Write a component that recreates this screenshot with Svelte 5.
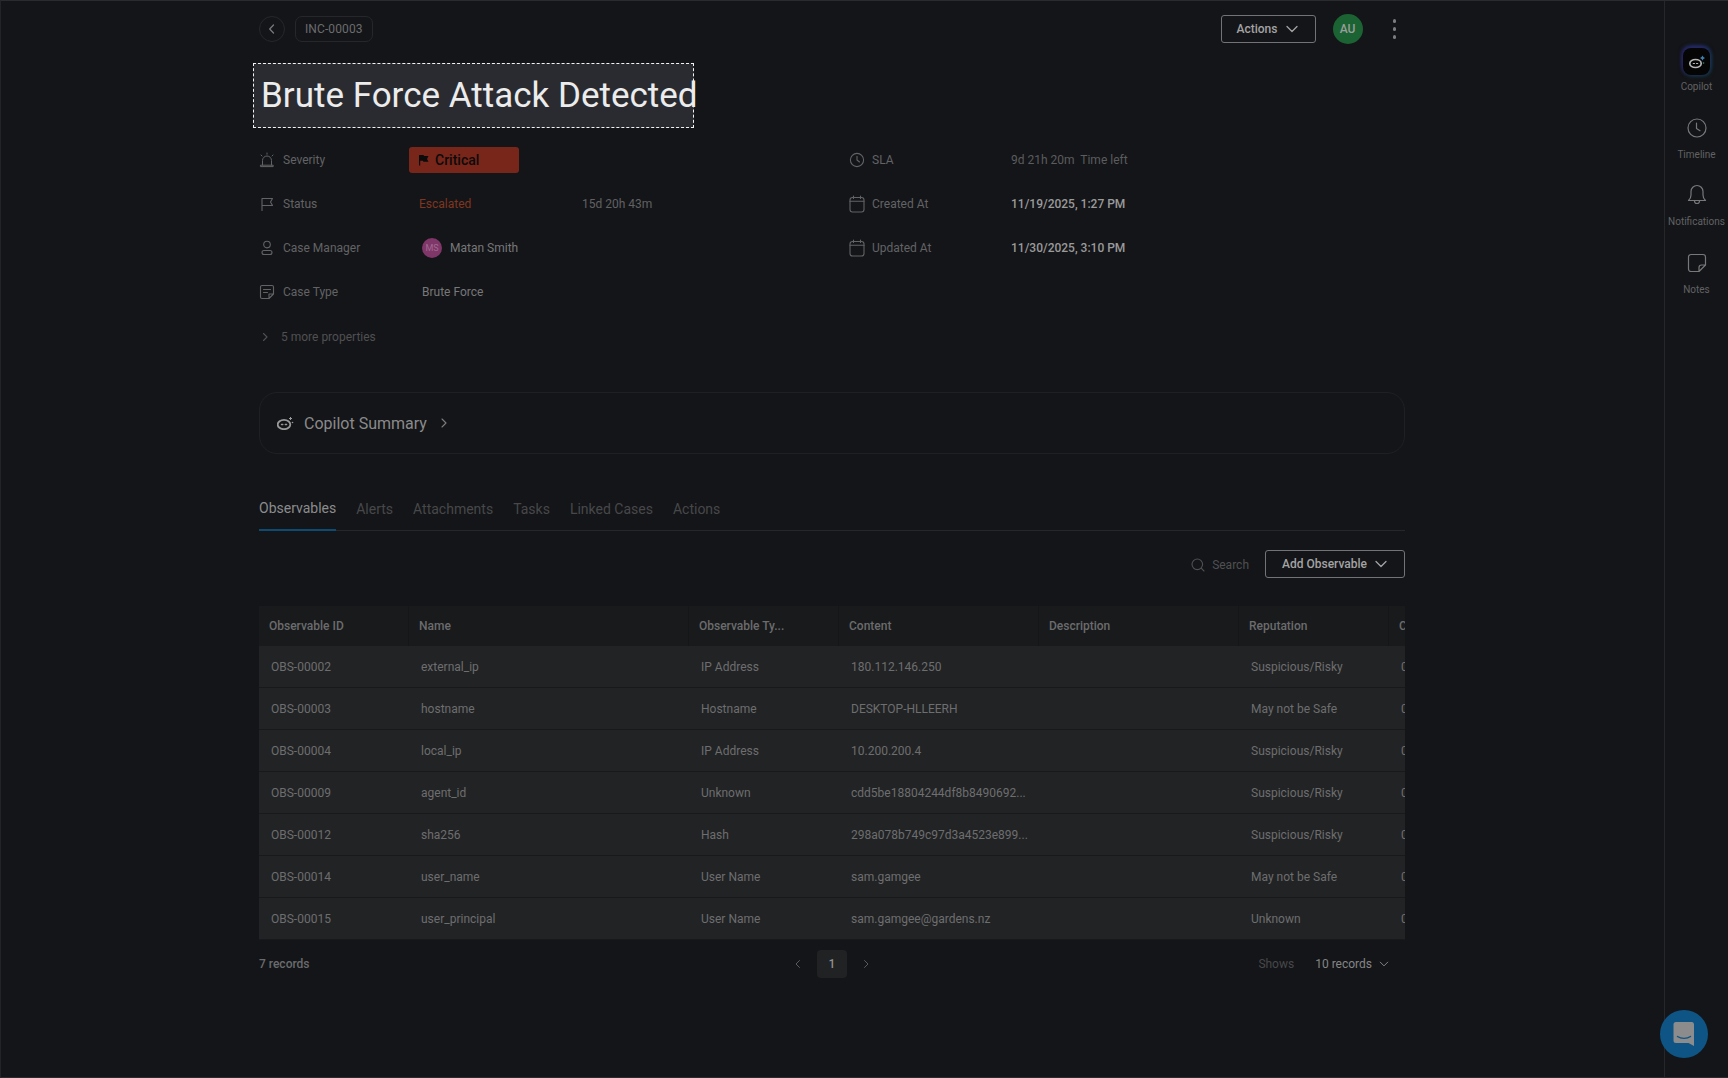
<script lang="ts">
  // Case detail page, dimmed behind the inline title edit
  const columns = ['Observable ID', 'Name', 'Observable Ty...', 'Content', 'Description', 'Reputation', 'Created'];

  const rows = [
    ['OBS-00002', 'external_ip', 'IP Address', '180.112.146.250', '', 'Suspicious/Risky', '0'],
    ['OBS-00003', 'hostname', 'Hostname', 'DESKTOP-HLLEERH', '', 'May not be Safe', '0'],
    ['OBS-00004', 'local_ip', 'IP Address', '10.200.200.4', '', 'Suspicious/Risky', '0'],
    ['OBS-00009', 'agent_id', 'Unknown', 'cdd5be18804244df8b8490692...', '', 'Suspicious/Risky', '0'],
    ['OBS-00012', 'sha256', 'Hash', '298a078b749c97d3a4523e899...', '', 'Suspicious/Risky', '0'],
    ['OBS-00014', 'user_name', 'User Name', 'sam.gamgee', '', 'May not be Safe', '0'],
    ['OBS-00015', 'user_principal', 'User Name', 'sam.gamgee@gardens.nz', '', 'Unknown', '0']
  ];

  const tabs = ['Observables', 'Alerts', 'Attachments', 'Tasks', 'Linked Cases', 'Actions'];
</script>

{#snippet chevronDown(size)}
  <svg width={size} height={size} viewBox="0 0 16 16" fill="none" stroke="currentColor" stroke-width="1.3" stroke-linecap="round" stroke-linejoin="round"><path d="M3 5.5l5 5 5-5" /></svg>
{/snippet}

{#snippet calendar()}
  <svg width="16" height="18" viewBox="0 0 16 18" fill="none" stroke="currentColor" stroke-width="1.1" stroke-linecap="round"><rect x="1" y="2.5" width="14" height="14.5" rx="2.5" /><path d="M1 6.2h14M4.5 1v2.4M11.5 1v2.4" /></svg>
{/snippet}

<div class="app">
  <main class="page">
    <header class="topbar">
      <button type="button" class="back" aria-label="Back">
        <svg width="12" height="12" viewBox="0 0 12 12" fill="none" stroke="currentColor" stroke-width="1.3" stroke-linecap="round" stroke-linejoin="round"><path d="M7.5 2L3.7 6l3.8 4" /></svg>
      </button>
      <span class="case-id">INC-00003</span>
      <div class="topbar-right">
        <button type="button" class="outline-btn actions-btn">Actions {@render chevronDown(16)}</button>
        <span class="me">AU</span>
        <span class="kebab"><i></i><i></i><i></i></span>
      </div>
    </header>

    <div class="title-box"><span class="title-text">Brute Force Attack Detected</span><span class="caret"></span></div>

    <section class="props">
      <div class="prop-col left">
        <div class="prop">
          <span class="prop-label">
            <svg class="prop-icon" width="16" height="16" viewBox="0 0 16 16" fill="none" stroke="currentColor" stroke-width="1" stroke-linecap="round"><path d="M3.5 13V8.5a4.5 4.5 0 0 1 9 0V13M1.8 13.2h12.4v1.4H1.8zM8 1v1.2M2 3l1 1M14 3l-1 1" /></svg>
            Severity
          </span>
          <span class="severity">
            <svg width="11" height="12" viewBox="0 0 11 12" fill="#0b0b0b"><path d="M1 1h4.5l.7 1H10.5L9 5l1.500 2.800H5.500l-.7-1H2.200V11.500H1z" /></svg>
            Critical
          </span>
        </div>
        <div class="prop">
          <span class="prop-label">
            <svg class="prop-icon" width="16" height="16" viewBox="0 0 16 16" fill="none" stroke="currentColor" stroke-width="1.1" stroke-linejoin="round" stroke-linecap="round"><path d="M3 14.500V2.500h10.500L11.500 6l2 3.500H3" /></svg>
            Status
          </span>
          <span class="escalated">Escalated</span>
          <span class="duration">15d 20h 43m</span>
        </div>
        <div class="prop">
          <span class="prop-label">
            <svg class="prop-icon" width="16" height="16" viewBox="0 0 16 16" fill="none" stroke="currentColor" stroke-width="1.1"><circle cx="8" cy="4.600" r="3.300" /><rect x="3" y="10.500" width="10" height="4" rx="2" /></svg>
            Case Manager
          </span>
          <span class="manager"><span class="initials">MS</span>Matan Smith</span>
        </div>
        <div class="prop">
          <span class="prop-label">
            <svg class="prop-icon" width="16" height="16" viewBox="0 0 16 16" fill="none" stroke="currentColor" stroke-width="1.1" stroke-linejoin="round" stroke-linecap="round"><path d="M10 14.500H3a1.500 1.500 0 0 1-1.500-1.500V3A1.500 1.500 0 0 1 3 1.500h10A1.500 1.500 0 0 1 14.500 3v7zM10 14.500V10h4.500M4.500 5.500h7M4.500 8.500h4" /></svg>
            Case Type
          </span>
          <span class="case-type">Brute Force</span>
        </div>
      </div>
      <div class="prop-col right">
        <div class="prop">
          <span class="prop-label">
            <svg class="prop-icon" width="16" height="16" viewBox="0 0 16 16" fill="none" stroke="currentColor" stroke-width="1.1" stroke-linecap="round" stroke-linejoin="round"><circle cx="8" cy="8" r="6.600" /><path d="M8 4.200V8l2.500 2" /></svg>
            SLA
          </span>
          <span class="sla">9d 21h 20m&nbsp; Time left</span>
        </div>
        <div class="prop">
          <span class="prop-label">{@render calendar()} Created At</span>
          <span class="date">11/19/2025, 1:27 PM</span>
        </div>
        <div class="prop">
          <span class="prop-label">{@render calendar()} Updated At</span>
          <span class="date">11/30/2025, 3:10 PM</span>
        </div>
      </div>
    </section>

    <div class="more">
      <svg width="12" height="12" viewBox="0 0 12 12" fill="none" stroke="currentColor" stroke-width="1.1" stroke-linecap="round" stroke-linejoin="round"><path d="M4.500 2.500L8 6l-3.500 3.500" /></svg>
      5 more properties
    </div>

    <section class="summary">
      <svg width="17" height="14" viewBox="0 0 17 14" fill="none"><ellipse cx="7" cy="8.500" rx="6.300" ry="4.700" stroke="#9a9a9a" stroke-width="1.800" /><path d="M4.500 8.500h1.300M8.300 8.500h1.300" stroke="#9a9a9a" stroke-width="1.400" stroke-linecap="round" /><path d="M13.500 1v3M12 2.500h3" stroke="#9a9a9a" stroke-width="1" /><circle cx="15.500" cy="6.500" r=".8" fill="#9a9a9a" /></svg>
      <span class="summary-title">Copilot Summary</span>
      <svg width="12" height="12" viewBox="0 0 12 12" fill="none" stroke="#7c7c7c" stroke-width="1.100" stroke-linecap="round" stroke-linejoin="round"><path d="M4 2l4 4-4 4" /></svg>
    </section>

    <nav class="tabs">
      {#each tabs as tab, i}
        <span class="tab" class:active={i === 0}>{tab}</span>
      {/each}
    </nav>

    <div class="toolbar">
      <span class="search">
        <svg width="14" height="14" viewBox="0 0 14 14" fill="none" stroke="currentColor" stroke-width="1.100" stroke-linecap="round"><circle cx="6.300" cy="6.300" r="5.300" /><path d="M10.200 10.200L13 13" /></svg>
        Search
      </span>
      <button type="button" class="outline-btn add-btn">Add Observable {@render chevronDown(16)}</button>
    </div>

    <div class="table">
      <div class="thead">
        {#each columns as col}
          <div class="th">{col}</div>
        {/each}
      </div>
      {#each rows as row}
        <div class="tr">
          {#each row as cell}
            <div class="td">{cell}</div>
          {/each}
        </div>
      {/each}
    </div>

    <footer class="pager">
      <span class="count">7 records</span>
      <div class="pages">
        <svg width="12" height="12" viewBox="0 0 12 12" fill="none" stroke="currentColor" stroke-width="1" stroke-linecap="round" stroke-linejoin="round"><path d="M7.500 2.500L4 6l3.500 3.500" /></svg>
        <span class="page-num">1</span>
        <svg width="12" height="12" viewBox="0 0 12 12" fill="none" stroke="currentColor" stroke-width="1" stroke-linecap="round" stroke-linejoin="round"><path d="M4.500 2.500L8 6l-3.500 3.500" /></svg>
      </div>
      <div class="shows">
        <span class="shows-label">Shows</span>
        <span class="shows-value">10 records {@render chevronDown(12)}</span>
      </div>
    </footer>
  </main>

  <aside class="rail">
    <div class="rail-item first">
      <span class="copilot-tile">
        <svg width="18" height="16" viewBox="0 0 18 16" fill="none"><ellipse cx="7.500" cy="9.500" rx="5.700" ry="4" stroke="#b5b5b5" stroke-width="1.700" /><path d="M5.300 9.500h1.200M8.500 9.500h1.200" stroke="#b5b5b5" stroke-width="1.200" stroke-linecap="round" /><path d="M14.500 1.500l.9 1.600 1.600.9-1.600.9-.9 1.600-.9-1.600-1.600-.9 1.600-.9z" fill="#3f7fae" /><circle cx="15.500" cy="9" r=".8" fill="#4c8a6a" /></svg>
      </span>
      <span class="rail-label">Copilot</span>
    </div>
    <div class="rail-item">
      <svg width="20" height="20" viewBox="0 0 20 20" fill="none" stroke="currentColor" stroke-width="1.200" stroke-linecap="round" stroke-linejoin="round"><circle cx="10" cy="10" r="9" /><path d="M9.500 5v5.500l3.500 2.200" /></svg>
      <span class="rail-label">Timeline</span>
    </div>
    <div class="rail-item">
      <svg width="20" height="21" viewBox="0 0 20 21" fill="none" stroke="currentColor" stroke-width="1.200" stroke-linecap="round" stroke-linejoin="round"><path d="M1.500 16.500c1.700-1.500 2.500-3 2.500-5.500V7.500a6 6 0 0 1 12 0V11c0 2.500.8 4 2.500 5.500zM7.500 17a2.500 2.500 0 0 0 5 0" /></svg>
      <span class="rail-label">Notifications</span>
    </div>
    <div class="rail-item">
      <svg width="20" height="20" viewBox="0 0 20 20" fill="none" stroke="currentColor" stroke-width="1.200" stroke-linejoin="round"><path d="M12 18.500H4a2.500 2.500 0 0 1-2.500-2.500V4A2.500 2.500 0 0 1 4 1.500h12A2.500 2.500 0 0 1 18.500 4v8zM12 18.500V14.500a2.500 2.500 0 0 1 2.500-2.500h4" /></svg>
      <span class="rail-label">Notes</span>
    </div>
  </aside>

  <button type="button" class="chat" aria-label="Chat">
    <svg width="22" height="26" viewBox="0 0 22 26" fill="none"><path d="M3 1h16a2.500 2.500 0 0 1 2 2.500V25l-5.500-3H3a2.500 2.500 0 0 1-2.500-2.500v-16A2.500 2.500 0 0 1 3 1z" fill="#8c8c8c" /><path d="M4.500 15.500c3.500 2.500 9.500 2.500 13 0" stroke="#0e5585" stroke-width="1.400" stroke-linecap="round" /></svg>
  </button>
</div>

<style>
  :global(body) {
    background: #141518;
    overflow: hidden;
  }

  .app {
    position: relative;
    display: flex;
    box-sizing: border-box;
    width: 1728px;
    height: 1078px;
    border-top: 1px solid #2a2b2e;
    border-bottom: 1px solid #2a2b2e;
    border-left: 1px solid #232427;
    background: #141518;
    color: #6f7072;
    font-family: Roboto, "Liberation Sans", sans-serif;
    font-size: 12px;
    overflow: hidden;
  }

  .page {
    box-sizing: border-box;
    width: 1663px;
    padding: 15px 259px 0 258px;
    flex-shrink: 0;
  }

  button {
    font-family: inherit;
    background: none;
    padding: 0;
    margin: 0;
    cursor: pointer;
  }

  .topbar {
    display: flex;
    align-items: center;
    height: 26px;
  }

  .back {
    display: flex;
    align-items: center;
    justify-content: center;
    box-sizing: border-box;
    width: 26px;
    height: 26px;
    border: 1px solid #26272a;
    border-radius: 50%;
    color: #77787a;
  }

  .case-id {
    display: flex;
    align-items: center;
    box-sizing: border-box;
    height: 26px;
    margin-left: 10px;
    padding: 0 9px;
    border: 1px solid #26272a;
    border-radius: 7px;
    color: #6b6c6e;
    letter-spacing: 0.1px;
  }

  .topbar-right {
    display: flex;
    align-items: center;
    margin-left: auto;
    margin-right: 6px;
  }

  .outline-btn {
    display: flex;
    align-items: center;
    box-sizing: border-box;
    height: 28px;
    border: 1px solid #727376;
    border-radius: 3px;
    color: #a3a3a4;
    font-size: 12px;
    font-weight: 500;
  }

  .actions-btn {
    width: 95px;
    padding-left: 15px;
    gap: 7px;
  }

  .me {
    display: flex;
    align-items: center;
    justify-content: center;
    width: 30px;
    height: 30px;
    margin-left: 17px;
    border-radius: 50%;
    background: #1c6333;
    color: #9a9d9b;
    font-size: 12px;
    font-weight: 500;
  }

  .kebab {
    display: flex;
    flex-direction: column;
    gap: 4.500px;
    margin-left: 30px;
    margin-right: 3px;
  }

  .kebab i {
    display: block;
    width: 3.500px;
    height: 3.500px;
    border-radius: 50%;
    background: #7d7d7f;
  }

  .title-box {
    display: inline-flex;
    align-items: center;
    box-sizing: border-box;
    width: 441px;
    height: 65px;
    margin: 21px 0 0 -6px;
    padding-left: 7px;
    border: 1.500px dashed #f2f2f2;
    background: #2a2b31;
  }

  .title-text {
    color: #ececec;
    font-size: 35px;
    white-space: nowrap;
  }

  .caret {
    display: block;
    width: 1.500px;
    height: 38px;
    margin-left: 1px;
    background: #d0d0d0;
  }

  .props {
    display: flex;
    margin-top: 10px;
  }

  .prop-col.left {
    width: 590px;
  }

  .prop {
    display: flex;
    align-items: center;
    height: 44px;
  }

  .prop-label {
    display: flex;
    align-items: center;
    gap: 8px;
    color: #626365;
  }

  .left .prop-label {
    width: 150px;
  }

  .right .prop-label {
    width: 162px;
    gap: 7px;
  }

  .prop-icon {
    flex-shrink: 0;
  }

  .severity {
    display: flex;
    align-items: center;
    gap: 6px;
    box-sizing: border-box;
    width: 110px;
    height: 26px;
    padding-left: 9px;
    border-radius: 3px;
    background: #78251a;
    color: #0b0b0b;
    font-size: 14px;
    font-weight: 500;
  }

  .escalated {
    width: 163px;
    margin-left: 10px;
    color: #80351f;
  }

  .duration {
    color: #606163;
  }

  .manager {
    display: flex;
    align-items: center;
    gap: 8px;
    margin-left: 13px;
    color: #77787a;
  }

  .initials {
    display: flex;
    align-items: center;
    justify-content: center;
    width: 20px;
    height: 20px;
    border-radius: 50%;
    background: #7f3668;
    color: #a06a91;
    font-size: 9px;
  }

  .case-type {
    margin-left: 13px;
    color: #77787a;
  }

  .sla {
    color: #5b5c5e;
  }

  .date {
    color: #9a9a9b;
    font-weight: 500;
  }

  .more {
    display: flex;
    align-items: center;
    gap: 10px;
    height: 16px;
    margin-top: 15px;
    padding-left: 0;
    color: #4f5052;
  }

  .summary {
    display: flex;
    align-items: center;
    box-sizing: border-box;
    height: 62px;
    margin-top: 47px;
    padding-left: 17px;
    border: 1px solid #1f2023;
    border-radius: 18px;
  }

  .summary-title {
    margin: 0 11px 0 10px;
    color: #8a8a8b;
    font-size: 16px;
  }

  .tabs {
    display: flex;
    gap: 20px;
    height: 77px;
    box-sizing: border-box;
    border-bottom: 1px solid #25272a;
  }

  .tab {
    display: flex;
    align-items: flex-end;
    height: 77px;
    box-sizing: border-box;
    padding-bottom: 14px;
    color: #47484a;
    font-size: 14px;
  }

  .tab.active {
    color: #8b8c8d;
    border-bottom: 2px solid #0f4a73;
    padding-bottom: 13px;
  }

  .toolbar {
    display: flex;
    align-items: center;
    justify-content: flex-end;
    height: 28px;
    margin-top: 19px;
  }

  .search {
    display: flex;
    align-items: center;
    gap: 7px;
    margin: 2px 16px 0 0;
    color: #4f5052;
  }

  .add-btn {
    width: 140px;
    padding-left: 16px;
    gap: 6px;
  }

  .table {
    width: 100%;
    margin-top: 28px;
    overflow: hidden;
  }

  .thead,
  .tr {
    display: grid;
    grid-template-columns: 150px 280px 150px 200px 200px 150px 150px;
  }

  .thead {
    height: 40px;
    background: #191a1c;
  }

  .th {
    display: flex;
    align-items: center;
    padding-left: 10px;
    border-right: 1px solid #151618;
    color: #6b6c6d;
    font-weight: 500;
    white-space: nowrap;
  }

  .tr {
    height: 42px;
    box-sizing: border-box;
    background: #222325;
    border-bottom: 1px solid #18191b;
  }

  .td {
    display: flex;
    align-items: center;
    padding-left: 12px;
    color: #6d6e6f;
    white-space: nowrap;
  }

  .pager {
    display: grid;
    grid-template-columns: 1fr auto 1fr;
    align-items: center;
    height: 28px;
    margin-top: 10px;
  }

  .count {
    color: #6a6b6c;
    font-weight: 500;
  }

  .pages {
    display: flex;
    align-items: center;
    gap: 13px;
    color: #5a5b5d;
  }

  .page-num {
    display: flex;
    align-items: center;
    justify-content: center;
    width: 30px;
    height: 28px;
    border-radius: 4px;
    background: #212224;
    color: #8f8f90;
    font-weight: 500;
  }

  .shows {
    display: flex;
    align-items: center;
    justify-content: flex-end;
    gap: 21px;
    padding-right: 15px;
  }

  .shows-label {
    color: #47484a;
  }

  .shows-value {
    display: flex;
    align-items: center;
    gap: 6px;
    color: #858586;
  }

  .rail {
    display: flex;
    flex-direction: column;
    box-sizing: border-box;
    width: 64px;
    border-left: 1px solid #26272a;
    padding-top: 45px;
  }

  .rail-item {
    display: flex;
    flex-direction: column;
    align-items: center;
    justify-content: flex-end;
    height: 67.500px;
    color: #77787a;
  }

  .rail-item.first {
    height: 47px;
  }

  .rail-label {
    margin-top: 11px;
    color: #616264;
    font-size: 10px;
    line-height: 12px;
  }

  .first .rail-label {
    margin-top: 6px;
  }

  .copilot-tile {
    display: flex;
    align-items: center;
    justify-content: center;
    width: 27px;
    height: 27px;
    border-radius: 8px;
    background: #050506;
    box-shadow: -1px -1px 4px #2d1d66, 1px 1px 4px #123f47, 0 -2px 4px #1c3a70;
  }

  .chat {
    position: absolute;
    left: 1659px;
    top: 1009px;
    display: flex;
    align-items: center;
    justify-content: center;
    width: 48px;
    height: 48px;
    border: none;
    border-radius: 50%;
    background: #0e5585;
  }
</style>
